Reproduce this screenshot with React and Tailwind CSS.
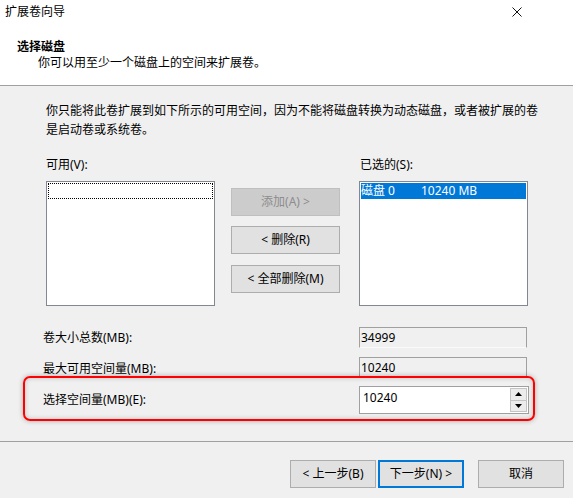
import { useState } from "react";

const FONT = { fontFamily: '"Noto Sans", "Noto Sans CJK SC", sans-serif' };

function Btn({ children, disabled, primary, className = "" }) {
  // classic win32 push button
  const look = disabled
    ? "bg-[#cccccc] border-[#bfbfbf] text-[#8d8d8d]"
    : primary
    ? "bg-[#e1e1e1] border-2 border-[#0078d7] text-black"
    : "bg-[#e1e1e1] border-[#adadad] text-black";
  return (
    <button
      type="button"
      className={`flex h-[28px] items-center justify-center border ${look} text-[12px] leading-none ${className}`}
    >
      {children}
    </button>
  );
}

function ReadOnlyField({ value }) {
  return (
    <div className="flex h-[21px] w-[168px] items-center border border-[#a0a0a0] border-b-[#fafafa] bg-[#f0f0f0] pl-[1px] leading-none">
      {value}
    </div>
  );
}

export default function App() {
  const [amount] = useState("10240");

  return (
    <div style={FONT} className="relative flex h-[498px] w-[573px] flex-col overflow-hidden bg-[#f0f0f0] text-[12px] text-black">
      {/* Header */}
      <div className="h-[86px] shrink-0 border-b border-[#a0a0a0] bg-white">
        <div className="flex items-start justify-between pl-[5px] pr-[51px] pt-[4px]">
          <span className="leading-[16px]">扩展卷向导</span>
          <svg width="10" height="10" viewBox="0 0 10 10" className="mt-[3px]">
            <path d="M0.5 0.5 L9.5 9.5 M9.5 0.5 L0.5 9.5" stroke="#111" strokeWidth="1" fill="none" />
          </svg>
        </div>
        <div className="mt-[19px] pl-[17px] font-bold leading-[16px]">选择磁盘</div>
        <div className="pl-[38px] leading-[16px]">你可以用至少一个磁盘上的空间来扩展卷。</div>
      </div>

      {/* Body */}
      <div className="mt-[15px] whitespace-nowrap pl-[46px] leading-[19px]">
        <div>你只能将此卷扩展到如下所示的可用空间，因为不能将磁盘转换为动态磁盘，或者被扩展的卷</div>
        <div>是启动卷或系统卷。</div>
      </div>

      <div className="mt-[18px] flex pl-[46px]">
        <div className="flex w-[169px] flex-col">
          <span className="leading-[16px]">可用(V):</span>
          <div className="mt-[8px] h-[125px] border border-[#828790] bg-white p-[1px]">
            <div className="h-[16px] border border-dotted border-black" />
          </div>
        </div>

        <div className="ml-[16px] flex w-[109px] flex-col pt-[31px]">
          <Btn disabled>添加(A) &gt;</Btn>
          <Btn className="mt-[10px]">&lt; 删除(R)</Btn>
          <Btn className="mt-[11px]">&lt; 全部删除(M)</Btn>
        </div>

        <div className="ml-[19px] flex w-[169px] flex-col">
          <span className="pl-[1px] leading-[16px]">已选的(S):</span>
          <div className="mt-[8px] h-[125px] border border-[#828790] bg-white pl-[1px] pr-[1px] pt-[1px]">
            <div className="flex h-[16px] items-center bg-[#0078d7] text-white leading-none">
              <span className="w-[60px]">磁盘 0</span>
              <span>10240 MB</span>
            </div>
          </div>
        </div>
      </div>

      {/* Sizes */}
      <div className="mt-[21px] flex flex-col pl-[43px]">
        <div className="flex items-center">
          <span className="w-[316px]">卷大小总数(MB):</span>
          <ReadOnlyField value="34999" />
        </div>
        <div className="mt-[9px] flex items-center">
          <span className="w-[316px] pt-[2px]">最大可用空间量(MB):</span>
          <ReadOnlyField value="10240" />
        </div>
        <div className="mt-[8px] flex items-center">
          <span className="w-[316px]">选择空间量(MB)(E):</span>
          <div className="flex h-[28px] w-[170px] border border-[#a0a0a0] bg-white">
            <div className="flex-1 pl-[3px] pt-[3px] leading-[16px]">{amount}</div>
            <div className="my-[1px] mr-[1px] flex w-[17px] flex-col border border-[#c4c4c4] bg-[#ececec]">
              <div className="flex flex-1 items-center justify-center border-b border-[#c4c4c4]">
                <svg width="7" height="4" viewBox="0 0 7 4">
                  <path d="M0 4 L3.5 0 L7 4 Z" fill="#000" />
                </svg>
              </div>
              <div className="flex flex-1 items-center justify-center">
                <svg width="7" height="4" viewBox="0 0 7 4">
                  <path d="M0 0 L7 0 L3.5 4 Z" fill="#000" />
                </svg>
              </div>
            </div>
          </div>
        </div>
      </div>

      {/* Footer */}
      <div className="mt-[27px] border-t border-[#a0a0a0]" />
      <div className="mt-[18px] flex justify-end pr-[9px]">
        <Btn className="w-[86px]">&lt; 上一步(B)</Btn>
        <Btn primary className="ml-[2px] w-[86px]">下一步(N) &gt;</Btn>
        <Btn className="ml-[14px] w-[86px]">取消</Btn>
      </div>

      {/* red highlight annotation */}
      <div className="pointer-events-none absolute left-[23px] top-[376px] h-[45px] w-[512px] rounded-[7px] border-2 border-[#ff0000] shadow-[0_0_5px_rgba(0,0,0,0.3),inset_0_0_5px_rgba(0,0,0,0.2)]" />
    </div>
  );
}
